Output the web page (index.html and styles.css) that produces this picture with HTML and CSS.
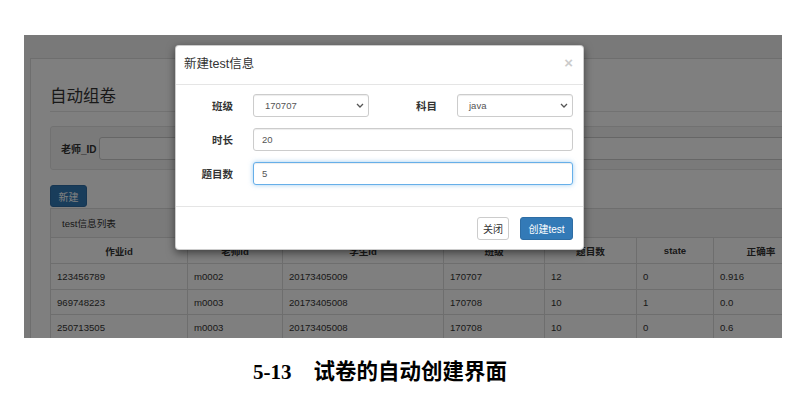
FILE: index.html
```html
<!DOCTYPE html>
<html lang="zh-CN">
<head>
<meta charset="utf-8">
<title>试卷的自动创建界面</title>
<link rel="stylesheet" href="styles.css">
</head>
<body>
<div class="shot">
  <div class="panel">
    <h3 class="page-title">自动组卷</h3>
    <hr class="rule">
    <div class="well">
      <label class="well-label">老师_ID</label>
      <input class="well-input" type="text">
    </div>
    <button class="btn btn-primary btn-new">新建</button>
    <div class="list">
      <div class="list-heading">test信息列表</div>
      <table class="grid">
        <colgroup>
          <col class="c1"><col class="c2"><col class="c3"><col class="c4"><col class="c5"><col class="c6"><col class="c7">
        </colgroup>
        <thead>
          <tr><th>作业id</th><th>老师id</th><th>学生id</th><th>班级</th><th>题目数</th><th>state</th><th>正确率</th></tr>
        </thead>
        <tbody>
          <tr class="r1"><td>123456789</td><td>m0002</td><td>20173405009</td><td>170707</td><td>12</td><td>0</td><td>0.916</td></tr>
          <tr><td>969748223</td><td>m0003</td><td>20173405008</td><td>170708</td><td>10</td><td>1</td><td>0.0</td></tr>
          <tr><td>250713505</td><td>m0003</td><td>20173405008</td><td>170708</td><td>10</td><td>0</td><td>0.6</td></tr>
        </tbody>
      </table>
    </div>
  </div>
  <div class="backdrop"></div>
  <div class="modal">
    <div class="modal-header">
      <h4 class="modal-title">新建test信息</h4>
      <span class="close">×</span>
    </div>
    <div class="modal-body">
      <label class="form-label">班级</label>
      <div class="select"><span>170707</span><svg class="chev" width="8" height="5" viewBox="0 0 8 5"><path d="M1 1l3 3 3-3" fill="none" stroke="#555" stroke-width="1.3"/></svg></div>
      <label class="form-label">科目</label>
      <div class="select"><span>java</span><svg class="chev" width="8" height="5" viewBox="0 0 8 5"><path d="M1 1l3 3 3-3" fill="none" stroke="#555" stroke-width="1.3"/></svg></div>
      <label class="form-label">时长</label>
      <input class="text-input full" type="text" value="20">
      <label class="form-label">题目数</label>
      <input class="text-input full focus" type="text" value="5">
    </div>
    <div class="modal-footer">
      <button class="btn btn-default btn-close">关闭</button>
      <button class="btn btn-primary btn-create">创建test</button>
    </div>
  </div>
</div>
<div class="caption"><span class="fig-no">5-13</span><span class="fig-title">试卷的自动创建界面</span></div>
</body>
</html>
```
FILE: styles.css
```css
* { box-sizing: border-box; }
body {
  margin: 0;
  background: #fff;
  font-family: "Liberation Sans", "Noto Sans CJK SC", sans-serif;
  font-size: 9.6px;
  color: #333;
}
.shot {
  position: relative;
  margin: 35px 0 0 24px;
  width: 758px;
  height: 303px;
  overflow: hidden;
  background: #f2f2f2;
}
.panel {
  margin: 23px 0 0 6px;
  width: 900px;
  height: 400px;
  background: #fff;
  border: 1px solid #ddd;
  padding: 28px 0 0 19px;
}
.page-title {
  margin: 0;
  font-size: 16.5px;
  line-height: 18px;
  font-weight: normal;
  color: #333;
}
.rule {
  margin: 6px 0 14px;
  border: 0;
  border-top: 1px solid #e5e5e5;
}
.well {
  display: flex;
  align-items: center;
  width: 900px;
  height: 44px;
  padding: 0 10px;
  background: #f5f5f5;
  border: 1px solid #e3e3e3;
  border-radius: 3px;
}
.well-label {
  font-weight: bold;
  font-size: 10px;
  color: #333;
}
.well-input {
  margin-left: 2px;
  width: 700px;
  height: 23px;
  border: 1px solid #ccc;
  border-radius: 3px;
  background: #fff;
}
.btn {
  display: inline-flex;
  align-items: center;
  justify-content: center;
  font-family: inherit;
  font-size: 10px;
  border-radius: 3px;
  border: 1px solid transparent;
  padding: 0;
  cursor: pointer;
}
.btn-primary {
  background: #337ab7;
  border-color: #2e6da4;
  color: #fff;
}
.btn-default {
  background: #fff;
  border-color: #ccc;
  color: #333;
}
.btn-new {
  display: flex;
  margin-top: 15px;
  width: 37px;
  height: 22px;
}
.list {
  margin-top: 1px;
}
.list-heading {
  width: 900px;
  height: 29px;
  padding-left: 11px;
  display: flex;
  align-items: center;
  background: #f5f5f5;
  border: 1px solid #ddd;
  border-bottom: 0;
  color: #333;
}
.grid {
  table-layout: fixed;
  border-collapse: collapse;
  width: 758px;
  background: #fff;
}
.c1 { width: 137px; }
.c2 { width: 95px; }
.c3 { width: 161px; }
.c4 { width: 101px; }
.c5 { width: 92px; }
.c6 { width: 77px; }
.c7 { width: 95px; }
.grid th, .grid td {
  border: 1px solid #ddd;
  padding: 0 6px;
  text-align: left;
  white-space: nowrap;
  overflow: hidden;
}
.grid th {
  height: 26px;
  text-align: center;
  font-weight: bold;
}
.grid td {
  height: 25px;
}
.grid .r1 td {
  height: 26px;
}
.backdrop {
  position: absolute;
  inset: 0;
  background: rgba(0, 0, 0, 0.5);
}
.modal {
  position: absolute;
  left: 151px;
  top: 10px;
  width: 409px;
  background: #fff;
  border: 1px solid rgba(0, 0, 0, 0.2);
  border-radius: 4px;
  box-shadow: 0 3px 9px rgba(0, 0, 0, 0.5);
}
.modal-header {
  display: flex;
  justify-content: space-between;
  align-items: center;
  height: 39px;
  padding: 0 10px 3px 8px;
  border-bottom: 1px solid #e5e5e5;
}
.modal-title {
  margin: 0;
  font-size: 12.5px;
  line-height: 18px;
  font-weight: normal;
  color: #333;
}
.close {
  font-size: 15px;
  font-weight: bold;
  line-height: 1;
  color: #000;
  opacity: 0.2;
  margin-top: -3px;
}
.modal-body {
  display: grid;
  grid-template-columns: 40px 116px 48px 116px;
  grid-auto-rows: 23px;
  column-gap: 20px;
  row-gap: 11px;
  padding: 9px 10px 21px 17px;
}
.form-label {
  justify-self: end;
  align-self: center;
  font-weight: bold;
  font-size: 10.5px;
  color: #333;
  white-space: nowrap;
}
.select {
  display: flex;
  align-items: center;
  justify-content: space-between;
  height: 23px;
  padding: 0 4px 0 11px;
  border: 1px solid #ccc;
  border-radius: 3px;
  font-size: 9.5px;
  color: #555;
  box-shadow: inset 0 1px 1px rgba(0, 0, 0, 0.075);
}
.chev { display: block; }
.text-input {
  height: 23px;
  padding: 0 8px;
  border: 1px solid #ccc;
  border-radius: 3px;
  font-family: inherit;
  font-size: 9.5px;
  color: #555;
  background: #fff;
  box-shadow: inset 0 1px 1px rgba(0, 0, 0, 0.075);
  outline: none;
}
.full { grid-column: 2 / -1; }
.text-input.focus {
  border-color: #66afe9;
  box-shadow: inset 0 1px 1px rgba(0, 0, 0, 0.075), 0 0 5px rgba(102, 175, 233, 0.6);
}
.modal-footer {
  display: flex;
  justify-content: flex-end;
  gap: 11px;
  padding: 10px 10px 9px;
  border-top: 1px solid #e5e5e5;
}
.btn-close { width: 32px; height: 23px; }
.btn-create { width: 53px; height: 23px; }
.caption {
  display: flex;
  gap: 22px;
  margin: 22px 0 0 253px;
  font-family: "Liberation Serif", "Noto Sans CJK SC", serif;
  font-weight: bold;
  font-size: 21px;
  line-height: 24px;
  color: #000;
}
.fig-title {
  font-size: 21.5px;
}
```
